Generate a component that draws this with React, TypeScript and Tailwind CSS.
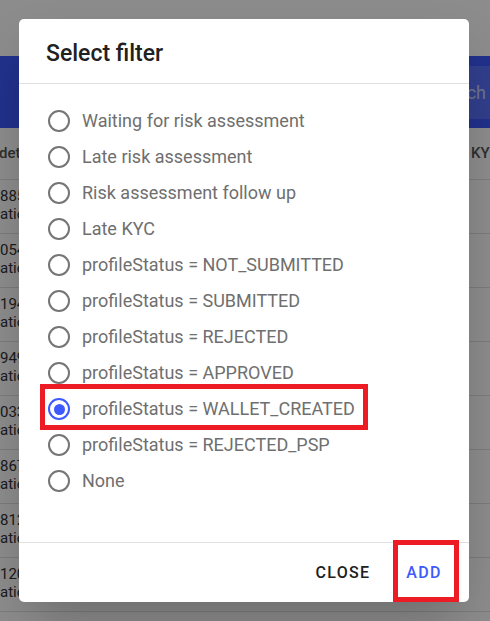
const options = [
  "Waiting for risk assessment",
  "Late risk assessment",
  "Risk assessment follow up",
  "Late KYC",
  "profileStatus = NOT_SUBMITTED",
  "profileStatus = SUBMITTED",
  "profileStatus = REJECTED",
  "profileStatus = APPROVED",
  "profileStatus = WALLET_CREATED",
  "profileStatus = REJECTED_PSP",
  "None",
];

const rows = ["885312", "054418", "194027", "949103", "033871", "867244", "812950", "120635"];

const Background = () => (
  <div className="flex flex-col w-full h-full bg-white text-[#333]">
    <div className="h-[56px] bg-white" />
    <div className="h-[72px] bg-[#3d5afe] flex items-center justify-end">
      <div className="h-[53px] w-[21px] bg-white/15 overflow-hidden flex items-center justify-end text-white/70 text-[18px]">
        <span className="whitespace-nowrap pr-[4px]">Search</span>
      </div>
    </div>
    <div className="h-[52px] flex items-center justify-between border-b border-[#e0e0e0] text-[15px] font-medium text-[#555]">
      <div className="w-[19px] overflow-hidden whitespace-nowrap">
        <span className="-ml-[1px]">details</span>
      </div>
      <div className="w-[19px] overflow-hidden whitespace-nowrap">KYC status</div>
    </div>
    {rows.map((n, i) => (
      <div
        key={i}
        className="h-[54px] shrink-0 border-b border-[#e0e0e0] flex flex-col pt-[7px] text-[15px] leading-[18px] text-[#333]"
      >
        <div className="w-[19px] overflow-hidden whitespace-nowrap">{n}</div>
        <div className={i === rows.length - 1 ? "whitespace-nowrap" : "w-[19px] overflow-hidden whitespace-nowrap"}>
          ationuser+210707_102024@test.com
        </div>
      </div>
    ))}
  </div>
);

const Radio = ({ checked }: { checked: boolean }) => (
  <div
    className={`w-[22px] h-[22px] rounded-full border-2 flex items-center justify-center shrink-0 ${
      checked ? "border-[#3d5afe]" : "border-[#757575]"
    }`}
  >
    {checked && <div className="w-[11px] h-[11px] rounded-full bg-[#3d5afe]" />}
  </div>
);

export default function App() {
  return (
    <div
      className="relative w-[490px] h-[621px] overflow-hidden"
      style={{ fontFamily: "Roboto, 'Liberation Sans', sans-serif" }}
    >
      <Background />
      <div className="absolute inset-0 bg-black/45" />

      <div className="absolute left-[19px] top-[19px] w-[450px] h-[583px] bg-white rounded-[5px] shadow-2xl flex flex-col">
        <div className="h-[65px] shrink-0 px-[27px] pt-[5px] flex items-center border-b border-[#e0e0e0]">
          <h2 className="text-[23px] leading-[30px] font-medium text-[#212121]">Select filter</h2>
        </div>
        <div className="flex-1 pt-[19px] pl-[29px]">
          {options.map((o) => (
            <div key={o} className="h-[36px] flex items-center gap-[12px]">
              <Radio checked={o === "profileStatus = WALLET_CREATED"} />
              <span className="text-[18px] leading-[22px] text-[#6f6f6f]">{o}</span>
            </div>
          ))}
        </div>
        <div className="h-[60px] shrink-0 border-t border-[#e0e0e0] flex items-center justify-end gap-[9px] pr-[9px]">
          <button className="w-[72px] h-[40px] text-[16px] font-medium tracking-[1.3px] text-[#212121]">CLOSE</button>
          <button className="w-[72px] h-[40px] text-[16px] font-medium tracking-[1.3px] text-[#3d5afe]">ADD</button>
        </div>
      </div>

      <div className="absolute left-[40px] top-[384px] w-[328px] h-[46px] border-[5px] border-[#ed1c24]" />
      <div className="absolute left-[393px] top-[540px] w-[66px] h-[62px] border-[5px] border-[#ed1c24]" />
    </div>
  );
}
